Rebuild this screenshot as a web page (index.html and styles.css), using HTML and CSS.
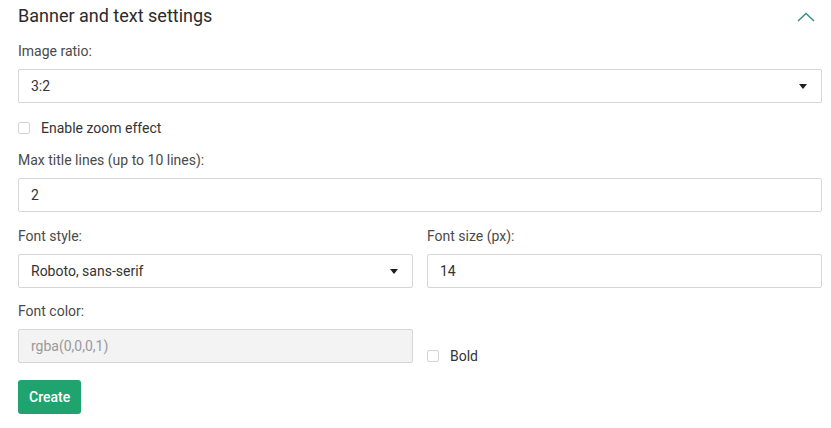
FILE: index.html
```html
<!DOCTYPE html>
<html>
<head>
<meta charset="utf-8">
<link rel="stylesheet" href="styles.css">
</head>
<body>
<div class="panel">
  <div class="header">
    <h2 class="title">Banner and text settings</h2>
    <svg class="chevron" width="18" height="10" viewBox="0 0 18 10"><path d="M1 9 L9 1.5 L17 9" fill="none" stroke="#2f8f8a" stroke-width="1.4"/></svg>
  </div>

  <div class="field f-ratio">
    <div class="label">Image ratio:</div>
    <div class="box select"><span>3:2</span><span class="caret"></span></div>
  </div>

  <div class="check-row zoom">
    <span class="check"></span><span class="check-text">Enable zoom effect</span>
  </div>

  <div class="field f-lines">
    <div class="label">Max title lines (up to 10 lines):</div>
    <div class="box"><span>2</span></div>
  </div>

  <div class="cols f-font">
    <div class="field">
      <div class="label">Font style:</div>
      <div class="box select"><span>Roboto, sans-serif</span><span class="caret"></span></div>
    </div>
    <div class="field">
      <div class="label">Font size (px):</div>
      <div class="box"><span>14</span></div>
    </div>
  </div>

  <div class="cols f-color">
    <div class="field">
      <div class="label">Font color:</div>
      <div class="box disabled"><span>rgba(0,0,0,1)</span></div>
    </div>
    <div class="bold-col">
      <div class="check-row">
        <span class="check"></span><span class="check-text">Bold</span>
      </div>
    </div>
  </div>

  <button class="btn">Create</button>
</div>
</body>
</html>
```

FILE: styles.css
```css
* { box-sizing: border-box; }
body {
  margin: 0;
  background: #fff;
  font-family: Roboto, "Noto Sans", sans-serif;
  color: #333;
}
.panel {
  padding: 5px 9px 0 18px;
}
.header {
  display: flex;
  align-items: center;
  justify-content: space-between;
  height: 22px;
}
.title {
  margin: 0;
  font-size: 18px;
  font-weight: 400;
  line-height: 22px;
  color: #2b2b2b;
}
.chevron {
  margin-right: 7px;
  margin-top: 2px;
}
.field {
  display: flex;
  flex-direction: column;
}
.label {
  font-size: 14px;
  line-height: 16px;
  color: #4a4a4a;
  margin-bottom: 10px;
}
.f-ratio { margin-top: 16px; }
.box {
  height: 34px;
  border: 1px solid #d6d6d6;
  border-radius: 2px;
  display: flex;
  align-items: center;
  justify-content: space-between;
  padding: 0 14px 0 12px;
  font-size: 14px;
  color: #333;
  background: #fff;
}
.box.disabled {
  background: #f3f3f3;
  color: #999;
}
.caret {
  width: 0;
  height: 0;
  border-left: 4.5px solid transparent;
  border-right: 4.5px solid transparent;
  border-top: 5px solid #1e1e1e;
}
.check-row {
  display: flex;
  align-items: center;
  font-size: 14px;
  color: #333;
}
.check {
  width: 12px;
  height: 12px;
  border: 1px solid #d3d3d3;
  border-radius: 2px;
  background: #fff;
  margin-right: 11px;
}
.check-text { line-height: 16px; }
.zoom { margin-top: 17px; }
.f-lines { margin-top: 16px; }
.cols {
  display: grid;
  grid-template-columns: 1fr 1fr;
  column-gap: 14px;
}
.f-font { margin-top: 16px; }
.f-color { margin-top: 15px; }
.bold-col {
  display: flex;
  flex-direction: column;
  justify-content: flex-end;
  margin-bottom: -1px;
}
.btn {
  margin-top: 17px;
  height: 34px;
  padding: 0 11px;
  border: none;
  border-radius: 3px;
  background: #20a46f;
  color: #fff;
  font-family: Roboto, sans-serif;
  font-size: 14px;
  font-weight: 500;
}
```
